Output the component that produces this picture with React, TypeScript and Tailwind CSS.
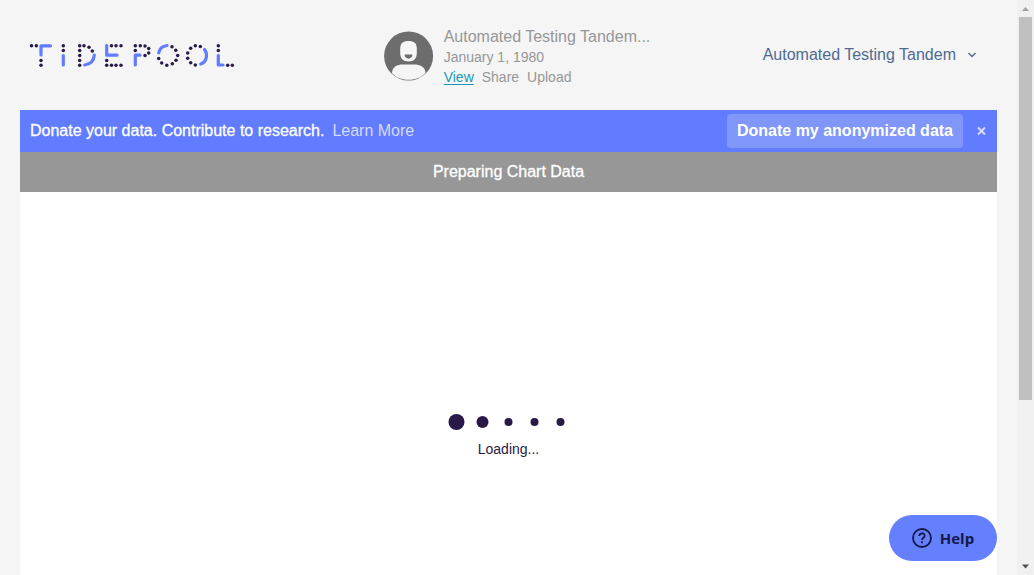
import React from "react";

const logoDots: [number, number][] = [
  [31.5, 45.5], [36.3, 45.5], [41, 60.3], [41, 65],
  [63.3, 45.5], [63.3, 50.3],
  [79.7, 45.5], [84, 45.5], [89, 47], [92.3, 50.7], [79.7, 50.3], [79.7, 55.2], [79.7, 60.2], [79.7, 65],
  [111.5, 45.5], [116, 45.5], [121, 45.5], [106.7, 60.2], [106.7, 65], [111.5, 65], [116, 65], [121, 65],
  [135.3, 45.5], [140.3, 45.5], [145, 45.7], [148.7, 48.3], [148.7, 52.8], [145, 55.3], [135.3, 50.3],
  [172, 46.5], [175.8, 50.1], [177.7, 55.2], [176, 60], [172.3, 63.6], [166.8, 65], [161.7, 62.7], [158.7, 58.2],
  [200.3, 46.3], [195.3, 45.5], [190.7, 48], [187.7, 52.7], [187.7, 58], [190.7, 62.5], [195.3, 64.9],
  [218.3, 45.5], [218.3, 50.3], [227.7, 65], [232.3, 65],
];

function Logo() {
  return (
    <svg viewBox="28 42 210 27" width="210" height="27" role="img" aria-label="Tidepool">
      <g fill="none" stroke="#627cff" strokeWidth="3.2" strokeLinecap="round" strokeLinejoin="round">
        <path d="M50.5 45.8H41V55" />
        <path d="M63.3 55.5V65" />
        <path d="M94.3 55.2Q93.5 64 84.7 65" />
        <path d="M106.7 45.5V55.2H117" />
        <path d="M140 55.2H135.3V65" />
        <path d="M158.7 52.8Q160.2 46.3 167 45.5" />
        <path d="M204.5 49.5C208 54 207 62 200.7 64" />
        <path d="M218.3 55.5V65H223" />
      </g>
      <g fill="#281946">
        {logoDots.map(([x, y]) => (
          <circle key={`${x}-${y}`} cx={x} cy={y + 0.2} r="1.75" />
        ))}
      </g>
    </svg>
  );
}

function Avatar() {
  return (
    <svg viewBox="0 0 50 50" width="50" height="50" className="shrink-0" aria-hidden="true">
      <circle cx="24.6" cy="25" r="24.5" fill="#6d6d6d" />
      <path d="M8 42C8 36 13 33.5 19 33.5H30C36 33.5 41.500 36 41.500 42C37 46.500 32 48.800 24.600 48.800S12 46.500 8 42Z" fill="#f5f5f5" />
      <path d="M16.200 18C16.200 12 19 10 24.500 10S32.800 12 32.800 18V22C32.800 27 30 30.500 24.500 30.500S16.200 27 16.200 22Z" fill="#f5f5f5" />
      <path d="M20.500 23.500H28.500C28.500 29 20.500 29 20.500 23.500Z" fill="#6d6d6d" />
    </svg>
  );
}

function Header() {
  return (
    <header className="grid h-[110px] shrink-0 grid-cols-3 items-center">
      <a href="#home" className="pl-2"><Logo /></a>
      <div className="flex items-center gap-2.5 pt-0.5 pl-[38px] whitespace-nowrap text-[#979797]">
        <Avatar />
        <div>
          <div className="text-base leading-[21px]">Automated Testing Tandem...</div>
          <div className="text-sm leading-5">January 1, 1980</div>
          <nav className="flex gap-2 text-sm leading-5">
            <a href="#view" className="text-[#1b98b8] underline underline-offset-2">View</a>
            <a href="#share">Share</a>
            <a href="#upload">Upload</a>
          </nav>
        </div>
      </div>
      <button type="button" className="flex items-center gap-3 justify-self-end pr-[21px] text-base whitespace-nowrap text-[#4f6a92]">
        Automated Testing Tandem
        <svg viewBox="0 0 8 6" width="8" height="6" fill="none" stroke="currentColor" strokeWidth="1.500" aria-hidden="true">
          <path d="M0.500 1L4 4.500L7.500 1" />
        </svg>
      </button>
    </header>
  );
}

function Banner() {
  return (
    <section className="flex h-[42px] shrink-0 items-center bg-[#627cff] px-2.5 text-base whitespace-nowrap text-white">
      <p className="[-webkit-text-stroke:0.3px_white]">Donate your data. Contribute to research.</p>
      <a href="#learn-more" className="ml-2 text-[#d4daf9]">Learn More</a>
      <button type="button" className="ml-auto h-[34px] rounded bg-[#8196f9] px-2.5 text-base font-bold">
        Donate my anonymized data
      </button>
      <button type="button" aria-label="Close" className="ml-3.5 flex h-6 w-2.5 items-center">
        <svg viewBox="0 0 10 10" width="10" height="10" stroke="#d4daf9" strokeWidth="2" aria-hidden="true">
          <path d="M1 1.500L8 8.500M8 1.500L1 8.500" />
        </svg>
      </button>
    </section>
  );
}

function Loader() {
  return (
    <div className="flex flex-col items-center text-[#281946]" role="status">
      <svg viewBox="0 0 122 18" width="122" height="18" fill="#281946" aria-hidden="true">
        <circle cx="8.5" cy="9" r="8" />
        <circle cx="34.5" cy="9" r="6" />
        <circle cx="60.5" cy="9" r="4" />
        <circle cx="86.5" cy="9" r="4" />
        <circle cx="112.5" cy="9" r="4" />
      </svg>
      <div className="mt-2 text-sm leading-5">Loading...</div>
    </div>
  );
}

function Scrollbar() {
  return (
    <div className="flex w-[17px] shrink-0 flex-col items-center bg-[#f0f0f0]" aria-hidden="true">
      <svg viewBox="0 0 17 17" width="17" height="17" className="shrink-0">
        <path d="M5 11L8.500 7L12 11Z" fill="#a0a0a0" />
      </svg>
      <div className="w-[13px] flex-[383] bg-[#c0c0c0]" />
      <div className="flex-[158]" />
      <svg viewBox="0 0 17 17" width="17" height="17" className="shrink-0">
        <path d="M5 6.500L8.500 10.500L12 6.500Z" fill="#505050" />
      </svg>
    </div>
  );
}

export default function App() {
  return (
    <div className="flex h-screen overflow-hidden bg-[#f5f5f5] font-['Liberation_Sans',sans-serif]">
      <div className="flex min-w-0 flex-1 flex-col px-5">
        <Header />
        <Banner />
        <h1 className="shrink-0 bg-[#979797] text-center text-base leading-10 text-white [-webkit-text-stroke:0.3px_white]">
          Preparing Chart Data
        </h1>
        <main className="flex flex-1 flex-col items-center bg-white pt-[221px]">
          <Loader />
        </main>
      </div>
      <button
        type="button"
        className="fixed right-[37px] bottom-3.5 flex h-[46px] w-[108px] items-center justify-center gap-2 rounded-full bg-[#6480ff] font-['Open_Sans',sans-serif] text-[15px] font-bold text-[#14194a]"
      >
        <svg viewBox="0 0 20 20" width="20" height="20" fill="none" stroke="currentColor" strokeWidth="1.800" aria-hidden="true">
          <circle cx="10" cy="10" r="9" />
          <path d="M7.300 8C7.300 4.400 12.700 4.400 12.700 7.800C12.700 9.800 10 9.800 10 12M10 13.300V15.200" />
        </svg>
        Help
      </button>
      <Scrollbar />
    </div>
  );
}
